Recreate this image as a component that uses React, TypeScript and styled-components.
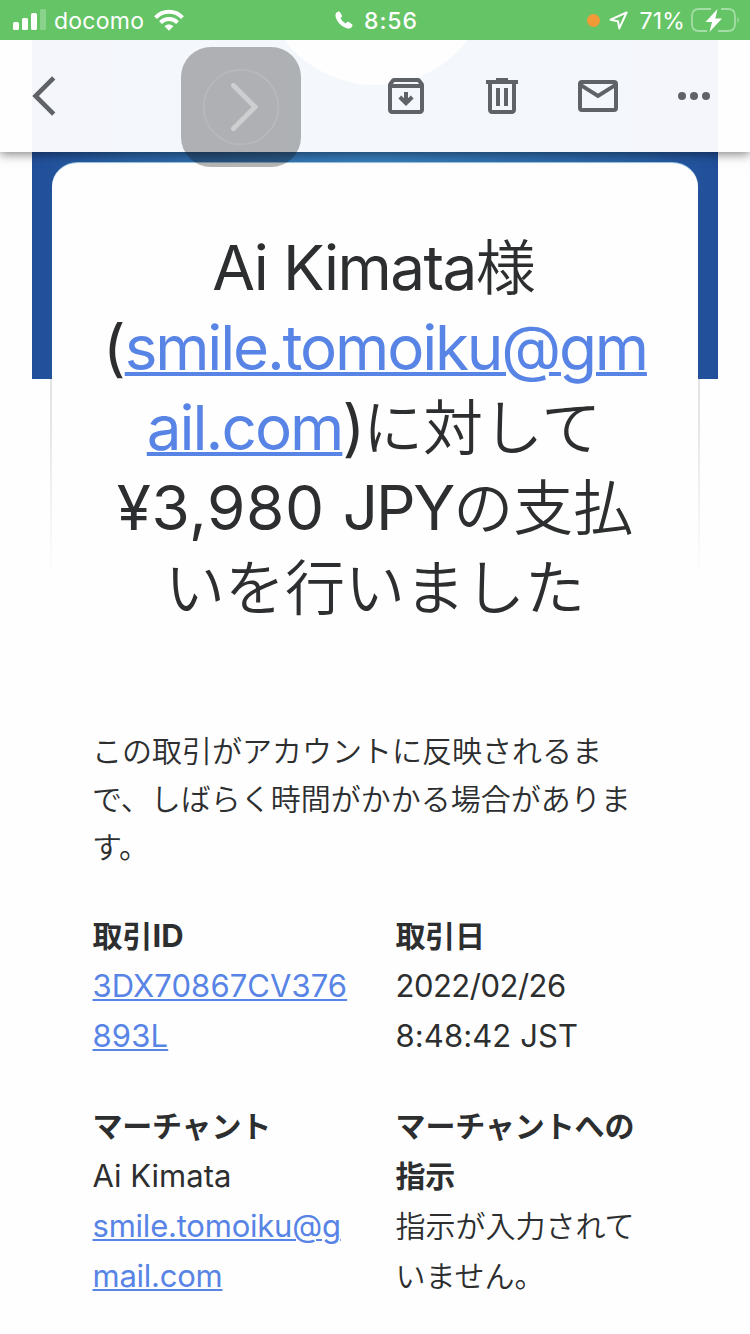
import React from "react";
import styled, { createGlobalStyle } from "styled-components";

const GlobalStyle = createGlobalStyle`
  * { box-sizing: border-box; }
  body { margin: 0; background: #fefefe; }
`;

const Screen = styled.div`
  position: relative;
  display: flex;
  flex-direction: column;
  width: 750px;
  height: 1334px;
  overflow: hidden;
  background: #fefefe;
  color: #2c2e2f;
  font-family: Inter, "Noto Sans CJK JP", sans-serif;
`;

const StatusBar = styled.header`
  position: relative;
  z-index: 2;
  display: grid;
  grid-template-columns: 1fr auto 1fr;
  align-items: center;
  height: 40px;
  flex: none;
  padding: 0 10px 0 13px;
  background: #65c466;
  color: #fff;
  font-size: 23px;
  line-height: 40px;
`;

const StatusGroup = styled.div<{ $end?: boolean }>`
  display: flex;
  align-items: center;
  justify-content: ${(p) => (p.$end ? "flex-end" : "flex-start")};
  height: 40px;
  svg { display: block; flex: none; }
`;

const StatusText = styled.span<{ $weight?: number; $track?: number; $left?: number; $right?: number }>`
  font-weight: ${(p) => p.$weight ?? 400};
  letter-spacing: ${(p) => p.$track ?? 0}px;
  margin-left: ${(p) => p.$left ?? 0}px;
  margin-right: ${(p) => p.$right ?? 0}px;
  padding-top: 1px;
`;

const RecordingDot = styled.span`
  width: 13px;
  height: 13px;
  margin: 1px 9px 0 0;
  border-radius: 50%;
  background: #f19a37;
`;

const Toolbar = styled.nav`
  position: relative;
  z-index: 1;
  display: flex;
  align-items: center;
  justify-content: space-between;
  height: 112px;
  flex: none;
  padding: 0 32px;
  color: #5f6368;
  background:
    linear-gradient(#fefefe, #fefefe) 0 0 / 32px 100% no-repeat,
    linear-gradient(#fefefe, #fefefe) 100% 0 / 32px 100% no-repeat,
    radial-gradient(circle at 376px -71px, #fefefe 115.5px, transparent 116.5px),
    linear-gradient(90deg, #f4f6fb 32px, #f4f8fc 50%, #f4f6fb 718px);
  box-shadow: 0 2px 10px rgba(0, 0, 0, 0.5);
  svg { display: block; }
`;

const Actions = styled.div`
  display: flex;
  gap: 48px;
`;

const AssistiveButton = styled.button`
  position: absolute;
  z-index: 2;
  top: 47px;
  left: 181px;
  width: 120px;
  height: 120px;
  padding: 0;
  border: 0;
  border-radius: 30px;
  background: rgba(20, 20, 20, 0.31);
  svg { display: block; }
`;

const Message = styled.main`
  margin: 0 32px;
  padding: 11px 20px 0;
  background:
    linear-gradient(90deg, #214e99 0, #2a63a5 14%, #387fbc 50%, #2a63a5 86%, #214e99 100%)
    0 0 / 100% 227px no-repeat;
`;

const Card = styled.article`
  position: relative;
  height: 1171px;
  padding: 65px 0 0;
  border-radius: 26px 26px 0 0 / 24px 24px 0 0;
  background: #fefefe;
  box-shadow: 0 -1px 0 #9cc4e0;
`;

const CardEdge = styled.i<{ $side: "left" | "right" }>`
  position: absolute;
  top: 216px;
  ${(p) => p.$side}: -2px;
  width: 2px;
  height: 200px;
  background: linear-gradient(#e2e2e2, #e8e8e8 30%, #fefefe);
`;

const Heading = styled.h1`
  margin: 0;
  font-size: 62px;
  font-weight: 400;
  text-align: center;
`;

const Line = styled.span<{ $h: number; $shift?: number }>`
  display: block;
  height: ${(p) => p.$h}px;
  line-height: ${(p) => p.$h}px;
  padding-left: ${(p) => Math.max(0, p.$shift ?? 0)}px;
  padding-right: ${(p) => Math.max(0, -(p.$shift ?? 0))}px;
  white-space: nowrap;
`;

const Latin = styled.span<{ $track?: number }>`
  letter-spacing: ${(p) => p.$track ?? 0}px;
`;

const Link = styled.a<{ $track?: number; $thick?: number; $offset?: number }>`
  color: #5884e6;
  letter-spacing: ${(p) => p.$track ?? 0}px;
  text-decoration: underline;
  text-decoration-thickness: ${(p) => p.$thick ?? 2}px;
  text-underline-offset: ${(p) => p.$offset ?? 2}px;
`;

const Kana = styled.span<{ $size: number; $bold?: boolean; $track?: number }>`
  font-family: "Noto Sans CJK JP", sans-serif;
  font-size: ${(p) => p.$size}px;
  font-weight: ${(p) => (p.$bold ? 700 : 350)};
  letter-spacing: ${(p) => p.$track ?? 0}px;
  line-height: 0;
`;

const Notice = styled.p`
  margin: 99px 0 0 40px;
  font-size: 31px;
`;

const Details = styled.dl`
  display: grid;
  grid-template-columns: 303px 1fr;
  row-gap: 40px;
  margin: 40px 0 0 40.5px;
  font-size: 31px;
`;

const Detail = styled.div`
  dt, dd { margin: 0; }
  dt { font-weight: 700; }
`;

const SignalIcon = () => (
  <svg width="34" height="24" viewBox="0 0 34 24" fill="#fff">
    <rect x="0" y="14" width="6" height="8" rx="1.6" />
    <rect x="9" y="10" width="6" height="12" rx="1.6" />
    <rect x="18" y="5" width="6" height="17" rx="1.6" />
    <rect x="27" y="1" width="6" height="21" rx="1.6" opacity=".25" />
  </svg>
);

const WifiIcon = () => (
  <svg width="30" height="22" viewBox="0 0 30 22" fill="none" stroke="#fff" strokeWidth="4">
    <path d="M1.500 8.600C9 .8 21 .8 28.500 8.600" />
    <path d="M6.500 13.600C11.200 8.900 18.800 8.900 23.500 13.600" />
    <path d="M10.600 17.200C13 15 17 15 19.400 17.200L15 21.700Z" fill="#fff" stroke="none" />
  </svg>
);

const PhoneIcon = () => (
  <svg width="21" height="18" viewBox="0 0 21 18" fill="#fff">
    <path d="M3.200.5C1.200 1.200.2 3 .5 5.100 1.500 10.800 7 16.500 12.700 17.500c2 .3 3.900-.7 4.700-2.600.3-.7.1-1.300-.5-1.700l-3-2.100c-.7-.5-1.400-.4-2 .2l-1.100 1.100C8.700 11.300 6.600 9.200 5.500 7.200l1-1c.6-.6.7-1.200.3-1.900L4.900 1.100C4.500.5 3.900.2 3.200.5Z" />
  </svg>
);

const LocationIcon = () => (
  <svg width="19" height="19" viewBox="0 0 19 19" fill="none" stroke="#fff" strokeWidth="2" strokeLinejoin="round">
    <path d="M17.600 1.500L1.500 8.700L9 10.200L10.300 17.400Z" />
  </svg>
);

const BatteryIcon = () => (
  <svg width="49" height="26" viewBox="0 0 49 26" fill="none">
    <path d="M20 2H8Q1 2 1 9V17Q1 24 8 24H16M27 24H37Q44 24 44 17V9Q44 2 37 2H30" stroke="#fff" strokeOpacity=".42" strokeWidth="1.800" />
    <path d="M46.500 10Q49 13 46.500 16Z" fill="#fff" opacity=".5" />
    <path d="M26.500 2L14.500 15H21L18.500 25L31 11.600H24.300Z" fill="#fff" />
  </svg>
);

const BackIcon = () => (
  <svg width="24" height="40" viewBox="0 0 24 40" fill="none" stroke="currentColor" strokeWidth="4.600">
    <path d="M21.700 1.800L3.500 20L21.700 38.200" />
  </svg>
);

const ArchiveIcon = () => (
  <svg width="48" height="48" viewBox="0 0 24 24" fill="currentColor">
    <path fillRule="evenodd" d="M20.540 5.230L19.150 3.550C18.880 3.210 18.470 3 18 3H6c-.47 0-.88.21-1.160.55L3.460 5.230C3.170 5.570 3 6.020 3 6.500V19c0 1.100.9 2 2 2h14c1.100 0 2-.9 2-2V6.500c0-.48-.17-.93-.46-1.270zM6.240 5h11.520l.83 1H5.420l.82-1zM5 19V8h14v11H5z" />
    <path d="M11 10h2v3.100l1.400-1.300 1.400 1.400L12 17l-3.800-3.800 1.400-1.400L11 13.100z" />
  </svg>
);

const TrashIcon = () => (
  <svg width="48" height="48" viewBox="0 0 24 24" fill="currentColor">
    <path fillRule="evenodd" d="M15 4V3H9v1H4v2h1v13c0 1.100.9 2 2 2h10c1.100 0 2-.9 2-2V6h1V4h-5zm2 15H7V6h10v13z" />
    <path d="M9 8h2v9H9zM13 8h2v9h-2z" />
  </svg>
);

const MailIcon = () => (
  <svg width="48" height="48" viewBox="0 0 24 24" fill="none" stroke="currentColor" strokeWidth="2">
    <rect x="3" y="5" width="18" height="14" rx="1" />
    <path d="M3 6.300L12 12L21 6.300" />
  </svg>
);

const MoreIcon = () => (
  <svg width="48" height="48" viewBox="0 0 24 24" fill="currentColor">
    <circle cx="6" cy="12" r="2" />
    <circle cx="12" cy="12" r="2" />
    <circle cx="18" cy="12" r="2" />
  </svg>
);

const ForwardIcon = () => (
  <svg width="120" height="120" viewBox="0 0 120 120" fill="none">
    <circle cx="60" cy="60" r="37.300" stroke="#fff" strokeOpacity=".1" strokeWidth="2" />
    <path d="M52.500 38.500L74 60L52.500 81.500" stroke="#fff" strokeOpacity=".38" strokeWidth="5" strokeLinecap="round" />
  </svg>
);

export default function App() {
  return (
    <Screen>
      <GlobalStyle />
      <StatusBar>
        <StatusGroup>
          <SignalIcon />
          <StatusText $left={7} $right={10} $track={0.25}>docomo</StatusText>
          <WifiIcon />
        </StatusGroup>
        <StatusGroup>
          <PhoneIcon />
          <StatusText $weight={500} $left={8} $track={0.9}>8:56</StatusText>
        </StatusGroup>
        <StatusGroup $end>
          <RecordingDot />
          <LocationIcon />
          <StatusText $left={11} $right={6} $track={0.2}>71%</StatusText>
          <BatteryIcon />
        </StatusGroup>
      </StatusBar>

      <Toolbar>
        <BackIcon />
        <Actions>
          <ArchiveIcon />
          <TrashIcon />
          <MailIcon />
          <MoreIcon />
        </Actions>
      </Toolbar>
      <AssistiveButton aria-label="Forward">
        <ForwardIcon />
      </AssistiveButton>

      <Message>
        <Card>
          <CardEdge $side="left" />
          <CardEdge $side="right" />
          <Heading>
            <Line $h={80} $shift={-2}>
              <Latin $track={-1.6}>Ai Kimata</Latin>
              <Kana $size={60}>様</Kana>
            </Line>
            <Line $h={80}>
              <Latin $track={-1}>(</Latin>
              <Link $track={-2.2} $thick={4} $offset={2}>smile.tomoiku@gm</Link>
            </Line>
            <Line $h={80} $shift={-2}>
              <Link $track={-2} $thick={4} $offset={2}>ail.com</Link>
              <Latin $track={-2}>)</Latin>
              <Kana $size={60}>に対して</Kana>
            </Line>
            <Line $h={80}>
              <Latin $track={0.6}>¥3,980 </Latin>
              <Latin $track={-2.2}>JPY</Latin>
              <Kana $size={60}>の支払</Kana>
            </Line>
            <Line $h={80}>
              <Kana $size={60}>いを行いました</Kana>
            </Line>
          </Heading>

          <Notice>
            <Line $h={48}><Kana $size={30}>この取引がアカウントに反映されるま</Kana></Line>
            <Line $h={48}><Kana $size={30}>で、しばらく時間がかかる場合がありま</Kana></Line>
            <Line $h={48}><Kana $size={30}>す。</Kana></Line>
          </Notice>

          <Details>
            <Detail>
              <dt><Line $h={50}><Kana $size={30} $bold>取引</Kana><Latin>ID</Latin></Line></dt>
              <dd>
                <Line $h={50}><Link $track={0.08}>3DX70867CV376</Link></Line>
                <Line $h={50}><Link $track={0.15}>893L</Link></Line>
              </dd>
            </Detail>
            <Detail>
              <dt><Line $h={50}><Kana $size={30} $bold $track={-0.3}>取引日</Kana></Line></dt>
              <dd>
                <Line $h={50}><Latin $track={-0.5}>2022/02/26</Latin></Line>
                <Line $h={50}><Latin $track={0.1}>8:48:42 JST</Latin></Line>
              </dd>
            </Detail>
            <Detail>
              <dt><Line $h={50}><Kana $size={30} $bold $track={-0.2}>マーチャント</Kana></Line></dt>
              <dd>
                <Line $h={50}><Latin>Ai Kimata</Latin></Line>
                <Line $h={50}><Link $track={-0.22}>smile.tomoiku@g</Link></Line>
                <Line $h={50}><Link $track={-0.25}>mail.com</Link></Line>
              </dd>
            </Detail>
            <Detail>
              <dt>
                <Line $h={50}><Kana $size={30} $bold $track={-0.1}>マーチャントへの</Kana></Line>
                <Line $h={50}><Kana $size={30} $bold $track={-0.3}>指示</Kana></Line>
              </dt>
              <dd>
                <Line $h={50}><Kana $size={30}>指示が入力されて</Kana></Line>
                <Line $h={50}><Kana $size={30}>いません。</Kana></Line>
              </dd>
            </Detail>
          </Details>
        </Card>
      </Message>
    </Screen>
  );
}
